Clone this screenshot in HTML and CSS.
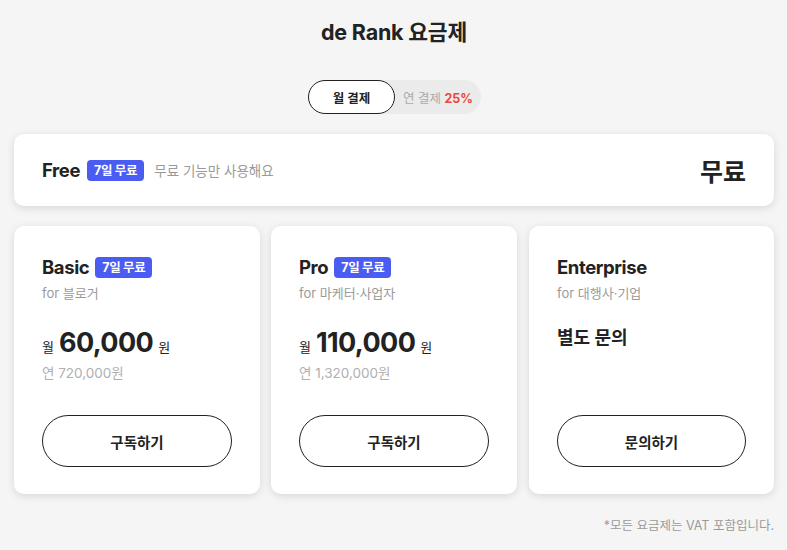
FILE: index.html
```html
<!DOCTYPE html>
<html lang="ko">
<head>
    <meta charset="UTF-8">
    <meta name="viewport" content="width=device-width, initial-scale=1.0">
    <title>de Rank 요금제</title>
    <link rel="stylesheet" href="styles.css">
</head>
<body>
    <div class="page">
        <h1 class="title">de Rank 요금제</h1>

        <div class="toggle-wrap">
            <div class="toggle">
                <button class="toggle-btn active" type="button">월 결제</button>
                <button class="toggle-btn" type="button">연 결제 <span class="discount">25%</span></button>
            </div>
        </div>

        <div class="card free-card">
            <div class="free-left">
                <span class="plan-name">Free</span>
                <span class="badge">7일 무료</span>
                <span class="free-desc">무료 기능만 사용해요</span>
            </div>
            <div class="free-price">무료</div>
        </div>

        <div class="plans">
            <div class="card plan">
                <div class="plan-head">
                    <span class="plan-name">Basic</span>
                    <span class="badge">7일 무료</span>
                </div>
                <div class="plan-for">for 블로거</div>
                <div class="price">
                    <span class="unit">월</span>
                    <span class="amount">60,000</span>
                    <span class="unit">원</span>
                </div>
                <div class="yearly">연 720,000원</div>
                <button class="plan-btn" type="button">구독하기</button>
            </div>

            <div class="card plan">
                <div class="plan-head">
                    <span class="plan-name">Pro</span>
                    <span class="badge">7일 무료</span>
                </div>
                <div class="plan-for">for 마케터·사업자</div>
                <div class="price">
                    <span class="unit">월</span>
                    <span class="amount">110,000</span>
                    <span class="unit">원</span>
                </div>
                <div class="yearly">연 1,320,000원</div>
                <button class="plan-btn" type="button">구독하기</button>
            </div>

            <div class="card plan">
                <div class="plan-head">
                    <span class="plan-name">Enterprise</span>
                </div>
                <div class="plan-for">for 대행사·기업</div>
                <div class="inquiry">별도 문의</div>
                <button class="plan-btn" type="button">문의하기</button>
            </div>
        </div>

        <p class="note">*모든 요금제는 VAT 포함입니다.</p>
    </div>
</body>
</html>
```

FILE: styles.css
```css
body {
    margin: 0;
    padding: 0;
    background-color: #f5f5f5;
    font-family: Inter, "Noto Sans CJK KR", sans-serif;
    color: #222;
}

.page {
    padding: 0 13px 0 14px;
}

.title {
    margin: 18px 0 0;
    font-size: 21.5px;
    line-height: 28px;
    font-weight: 700;
    text-align: center;
    letter-spacing: -0.2px;
}

.toggle-wrap {
    display: flex;
    justify-content: center;
    margin-top: 34px;
    padding-left: 1px;
}

.toggle {
    display: flex;
    width: 173px;
    height: 34px;
    background-color: #ebebeb;
    border-radius: 17px;
}

.toggle-btn {
    flex: 1;
    border: none;
    background: none;
    font-family: inherit;
    font-size: 12.5px;
    color: #aaa;
    padding: 0;
    border-radius: 17px;
    cursor: pointer;
}

.toggle-btn.active {
    flex: 0 0 87px;
    background-color: #fff;
    border: 1px solid #222;
    color: #222;
    font-weight: 700;
}

.discount {
    color: #e8483d;
    font-weight: 700;
}

.card {
    background-color: #fff;
    border-radius: 10px;
    box-shadow: 0 2px 8px rgba(0, 0, 0, 0.12);
    box-sizing: border-box;
}

.free-card {
    display: flex;
    justify-content: space-between;
    align-items: center;
    height: 72px;
    margin-top: 20px;
    padding: 0 28px;
}

.free-left {
    display: flex;
    align-items: center;
}

.plan-name {
    font-size: 18.5px;
    font-weight: 700;
    letter-spacing: -0.4px;
}

.badge {
    display: inline-block;
    margin-left: 6px;
    padding: 0 7px;
    height: 21px;
    line-height: 21px;
    border-radius: 4px;
    background-color: #4b5cf2;
    color: #fff;
    font-size: 12.5px;
    font-weight: 700;
    letter-spacing: -0.3px;
}

.free-card .badge {
    margin-left: 7px;
}

.free-desc {
    margin-left: 10px;
    font-size: 13.5px;
    color: #9a9a9a;
}

.free-price {
    font-size: 25px;
    font-weight: 700;
}

.plans {
    display: grid;
    grid-template-columns: 246px 246px 246px;
    column-gap: 11px;
    margin-top: 20px;
}

.plan {
    height: 268px;
    padding: 30px 28px 0;
    display: flex;
    flex-direction: column;
}

.plan:last-child {
    margin-left: 1px;
}

.plan-head {
    display: flex;
    align-items: center;
    height: 22px;
}

.plan-for {
    margin-top: 5px;
    font-size: 13px;
    color: #9a9a9a;
}

.price {
    display: flex;
    align-items: baseline;
    margin-top: 24px;
    height: 36px;
}

.unit {
    font-size: 13px;
}

.amount {
    margin: 0 5px 0 5px;
    font-size: 27px;
    font-weight: 700;
    letter-spacing: -0.6px;
}

.yearly {
    margin-top: 0;
    font-size: 13.5px;
    color: #b0b0b0;
}

.inquiry {
    margin-top: 21px;
    font-size: 18px;
    font-weight: 700;
    height: 60px;
}

.plan-btn {
    margin-top: auto;
    margin-bottom: 27px;
    height: 52px;
    width: 100%;
    background-color: #fff;
    border: 1px solid #222;
    border-radius: 26px;
    font-family: inherit;
    font-size: 14.5px;
    font-weight: 700;
    color: #222;
    cursor: pointer;
}

.note {
    margin: 21px 0 0;
    text-align: right;
    font-size: 12.5px;
    color: #9a9a9a;
}
```
